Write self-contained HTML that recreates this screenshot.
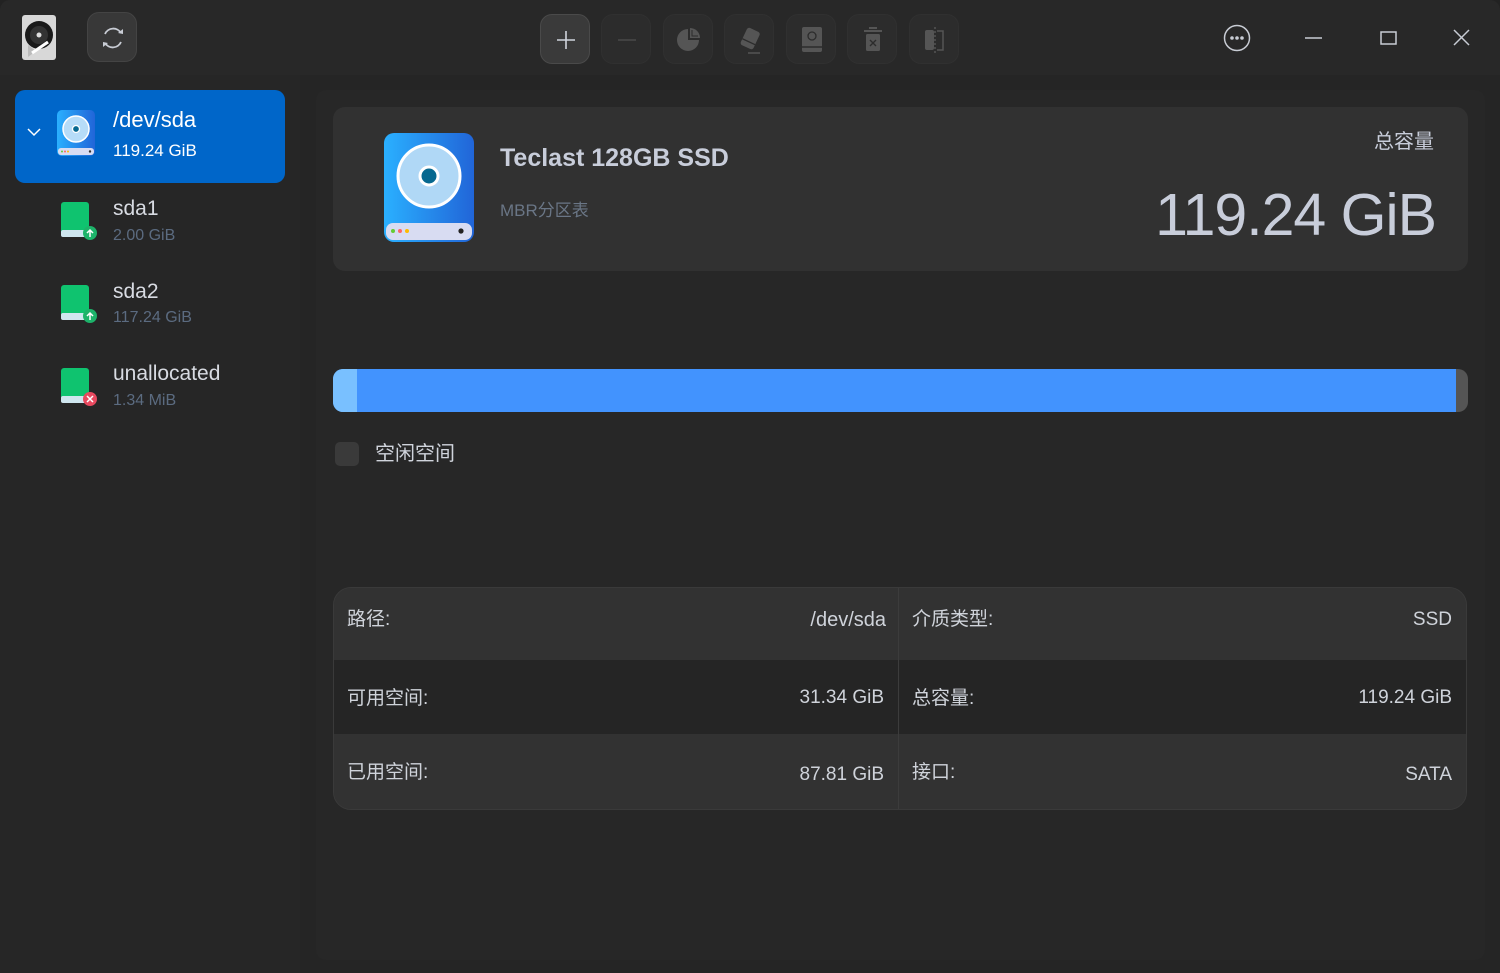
<!DOCTYPE html>
<html><head><meta charset="utf-8"><style>
*{margin:0;padding:0;box-sizing:border-box}
body{width:1500px;height:973px;background:#222;font-family:"Liberation Sans","Noto Sans CJK SC",sans-serif;color:#c9cdd6;position:relative;overflow:hidden}
.win{position:absolute;left:0;top:0;width:1500px;height:973px;background:#252525;border-radius:10px 10px 0 0;overflow:hidden}
.title{position:absolute;left:0;top:0;width:1500px;height:75px;background:#282828}
.side{position:absolute;left:0;top:75px;width:300px;height:898px;background:#262626}
.main{position:absolute;left:316px;top:90px;width:1169px;height:870px;background:#272727;border-radius:10px}
.tb{position:absolute;top:14px;width:50px;height:50px;border-radius:12px;background:#2c2c2c;border:1px solid #303030}
.tb svg{position:absolute;left:0;top:0}
.abs{position:absolute;line-height:1.2}
.sel{position:absolute;left:15px;top:90px;width:270px;height:93px;background:#0066c9;border-radius:10px}
.nm{font-size:21px;color:#d8dbe2}
.sz{font-size:16px;color:#5b6b80}
.card{position:absolute;left:333px;top:107px;width:1135px;height:164px;background:#313131;border-radius:12px}
.tbl{position:absolute;left:333px;top:587px;width:1134px;height:223px;border:1px solid #3a3a3a;border-radius:18px;overflow:hidden;background:#313131}
.row{position:absolute;left:0;width:1134px}
.cell{position:absolute;font-size:19px;color:#cfd3da;line-height:24px;height:24px}
</style></head><body>
<div class="win">
<div class="title"></div>
<div class="side"></div>
<div class="main"></div>

<svg class="abs" style="left:22px;top:15px" width="34" height="45" viewBox="0 0 34 45">
<rect x="0" y="0" width="34" height="45" rx="3" fill="#d8d8d8"/>
<circle cx="17" cy="20" r="14" fill="#1a1a1a"/><circle cx="17" cy="20" r="9" fill="#333"/><circle cx="17" cy="20" r="2.5" fill="#ddd"/>
<path d="M6 42 L6 30 L14 36 Z" fill="#bbb"/><path d="M10 38 L26 27" stroke="#fff" stroke-width="3"/>
</svg>
<div class="tb" style="left:87px;top:12px;background:#383838;border-color:#444">
<svg width="50" height="50" viewBox="0 0 50 50"><path d="M17 21 A9 9 0 0 1 33 20" fill="none" stroke="#c8ccd4" stroke-width="1.8"/><path d="M33 29 A9 9 0 0 1 17 30" fill="none" stroke="#c8ccd4" stroke-width="1.8"/><path d="M30 20 L35 21 L35 16Z" fill="#c8ccd4"/><path d="M20 30 L15 29 L15 34Z" fill="#c8ccd4"/></svg></div>

<div class="tb" style="left:540px;background:#3a3a3a;border-color:#4a4a4a"><svg width="50" height="50"><path d="M25 16v18M16 25h18" stroke="#d0d4dc" stroke-width="1.6"/></svg></div>
<div class="tb" style="left:601px"><svg width="50" height="50"><path d="M16 25h18" stroke="#4a4a4a" stroke-width="1.6"/></svg></div>
<div class="tb" style="left:663px"><svg width="50" height="50"><path d="M24 14 A11 11 0 1 0 35 25 L24 25Z" fill="#555"/><path d="M26 13 L26 23 L36 23 A10 10 0 0 0 26 13Z" fill="#555"/><path d="M28 15v6h6" fill="none" stroke="#2c2c2c" stroke-width="1"/></svg></div>
<div class="tb" style="left:724px"><svg width="50" height="50"><g transform="rotate(25 25 24)"><rect x="18" y="14" width="14" height="19" rx="2.5" fill="#555"/><path d="M18 27h14" stroke="#2c2c2c" stroke-width="1.3"/></g><path d="M23 38h12" stroke="#555" stroke-width="1.5"/></svg></div>
<div class="tb" style="left:786px"><svg width="50" height="50"><rect x="15" y="12" width="20" height="25" rx="2" fill="#555"/><path d="M15 32h20" stroke="#2c2c2c" stroke-width="1.5"/><circle cx="25" cy="21" r="4" fill="none" stroke="#2c2c2c" stroke-width="1.3"/></svg></div>
<div class="tb" style="left:847px"><svg width="50" height="50"><path d="M16 16h18M21 13h8" stroke="#555" stroke-width="2"/><rect x="18" y="19" width="14" height="17" rx="1.5" fill="#555"/><path d="M22 25l6 6M28 25l-6 6" stroke="#2c2c2c" stroke-width="1.4"/></svg></div>
<div class="tb" style="left:909px"><svg width="50" height="50"><rect x="15" y="15" width="9" height="20" rx="2" fill="#555"/><path d="M27 16h6v19h-6" fill="none" stroke="#555" stroke-width="1.5"/><path d="M25 12v26" stroke="#555" stroke-width="1.5" stroke-dasharray="2 2"/></svg></div>

<svg class="abs" style="left:1222px;top:23px" width="30" height="30"><circle cx="15" cy="15" r="12.5" fill="none" stroke="#c8ccd4" stroke-width="1.5"/><circle cx="10" cy="15" r="1.8" fill="#c8ccd4"/><circle cx="15" cy="15" r="1.8" fill="#c8ccd4"/><circle cx="20" cy="15" r="1.8" fill="#c8ccd4"/></svg>
<svg class="abs" style="left:1300px;top:30px" width="30" height="16"><path d="M5 8h17" stroke="#c8ccd4" stroke-width="1.5"/></svg>
<svg class="abs" style="left:1378px;top:28px" width="24" height="22"><rect x="3" y="4" width="15" height="12" fill="none" stroke="#c8ccd4" stroke-width="1.5"/></svg>
<svg class="abs" style="left:1450px;top:26px" width="24" height="24"><path d="M4 4l15 15M19 4L4 19" stroke="#c8ccd4" stroke-width="1.5"/></svg>

<div class="sel"></div>
<svg class="abs" style="left:26px;top:126px" width="18" height="12"><path d="M2 3l6 6 6-6" fill="none" stroke="#fff" stroke-width="1.5"/></svg>
<svg class="abs" style="left:56px;top:110px" width="40" height="48" viewBox="0 0 40 48">
<defs><linearGradient id="g1" x1="0" x2="1"><stop offset="0" stop-color="#2ab0ff"/><stop offset="1" stop-color="#2165d8"/></linearGradient></defs>
<rect x="1" y="0" width="38" height="46" rx="5" fill="url(#g1)"/><circle cx="20" cy="19" r="13" fill="#b6dcf8" stroke="#fff" stroke-width="1.5"/><circle cx="20" cy="19" r="3.5" fill="#06688f" stroke="#fff" stroke-width="1.3"/>
<rect x="2" y="38" width="36" height="7" rx="3" fill="#d8dcf2"/><circle cx="6" cy="41.5" r="1" fill="#6c3"/><circle cx="9" cy="41.5" r="1" fill="#f66"/><circle cx="12" cy="41.5" r="1" fill="#fb0"/><circle cx="34" cy="41.5" r="1.2" fill="#333"/></svg>
<div class="abs nm" style="left:113px;top:107px;color:#fff;font-size:22px">/dev/sda</div>
<div class="abs" style="left:113px;top:141px;color:#fff;font-size:17px">119.24 GiB</div>

<svg class="abs" style="left:60px;top:202px" width="40" height="40"><rect x="1" y="0" width="28" height="32" rx="3" fill="#0fc36f"/><rect x="1" y="28" width="28" height="7" rx="2" fill="#cfe6ef"/><circle cx="30" cy="31" r="7" fill="#1db36a"/><path d="M30 35v-7M27 31l3-3 3 3" stroke="#fff" stroke-width="1.5" fill="none"/></svg>
<div class="abs nm" style="left:113px;top:196px">sda1</div><div class="abs sz" style="left:113px;top:226px">2.00 GiB</div>
<svg class="abs" style="left:60px;top:285px" width="40" height="40"><rect x="1" y="0" width="28" height="32" rx="3" fill="#0fc36f"/><rect x="1" y="28" width="28" height="7" rx="2" fill="#cfe6ef"/><circle cx="30" cy="31" r="7" fill="#1db36a"/><path d="M30 35v-7M27 31l3-3 3 3" stroke="#fff" stroke-width="1.5" fill="none"/></svg>
<div class="abs nm" style="left:113px;top:279px">sda2</div><div class="abs sz" style="left:113px;top:308px">117.24 GiB</div>
<svg class="abs" style="left:60px;top:368px" width="40" height="40"><rect x="1" y="0" width="28" height="32" rx="3" fill="#0fc36f"/><rect x="1" y="28" width="28" height="7" rx="2" fill="#cfe6ef"/><circle cx="30" cy="31" r="7" fill="#e8495f"/><path d="M27 28l6 6M33 28l-6 6" stroke="#fff" stroke-width="1.5"/></svg>
<div class="abs nm" style="left:113px;top:361px">unallocated</div><div class="abs sz" style="left:113px;top:391px">1.34 MiB</div>

<div class="card"></div>
<svg class="abs" style="left:383px;top:133px" width="92" height="110" viewBox="0 0 92 110">
<defs><linearGradient id="g2" x1="0" x2="1"><stop offset="0" stop-color="#2ab0ff"/><stop offset="1" stop-color="#2165d8"/></linearGradient></defs>
<rect x="1" y="0" width="90" height="109" rx="10" fill="url(#g2)"/><circle cx="46" cy="43" r="31" fill="#b0d8f6" stroke="#fff" stroke-width="3"/><circle cx="46" cy="43" r="9" fill="#06688f" stroke="#fff" stroke-width="3"/>
<rect x="3" y="90" width="86" height="17" rx="7" fill="#d8dcf2"/><circle cx="10" cy="98" r="2" fill="#6c3"/><circle cx="17" cy="98" r="2" fill="#f66"/><circle cx="24" cy="98" r="2" fill="#fb0"/><circle cx="78" cy="98" r="2.6" fill="#222"/></svg>
<div class="abs" style="left:500px;top:143px;font-size:25px;font-weight:bold;color:#c8cdda">Teclast 128GB SSD</div>
<div class="abs" style="left:500px;top:201px;font-size:17px;color:#6a7686">MBR分区表</div>
<div class="abs" style="left:1374px;top:130px;font-size:20px;color:#c8cdda">总容量</div>
<div class="abs" style="right:64px;top:180px;font-size:59px;line-height:70px;color:#c8cdda;letter-spacing:-1px">119.24 GiB</div>

<div class="abs" style="left:333px;top:369px;width:1135px;height:43px;border-radius:10px;background:#555;overflow:hidden">
<div class="abs" style="left:0;top:0;width:1123px;height:43px;background:#4293fe"></div>
<div class="abs" style="left:0;top:0;width:24px;height:43px;background:#79c0ff"></div></div>
<div class="abs" style="left:335px;top:442px;width:24px;height:24px;border-radius:5px;background:#3a3a3a"></div>
<div class="abs" style="left:375px;top:441px;font-size:20px;line-height:26px;color:#d0d4dc">空闲空间</div>

<div class="tbl">
<div class="row" style="top:0;height:72px;background:#323232"></div>
<div class="row" style="top:72px;height:74px;background:#252525"></div>
<div class="row" style="top:146px;height:77px;background:#323232"></div>
<div class="abs" style="left:564px;top:0;width:1px;height:223px;background:#3c3c3c"></div>
<div class="cell" style="left:13px;top:20px">路径:</div><div class="cell" style="right:580px;top:20px;font-size:20px">/dev/sda</div>
<div class="cell" style="left:578px;top:20px">介质类型:</div><div class="cell" style="right:14px;top:20px">SSD</div>
<div class="cell" style="left:13px;top:99px">可用空间:</div><div class="cell" style="right:582px;top:98px">31.34 GiB</div>
<div class="cell" style="left:578px;top:99px">总容量:</div><div class="cell" style="right:14px;top:98px">119.24 GiB</div>
<div class="cell" style="left:13px;top:173px">已用空间:</div><div class="cell" style="right:582px;top:175px">87.81 GiB</div>
<div class="cell" style="left:578px;top:173px">接口:</div><div class="cell" style="right:14px;top:175px">SATA</div>
</div>
</div>
</body></html>
